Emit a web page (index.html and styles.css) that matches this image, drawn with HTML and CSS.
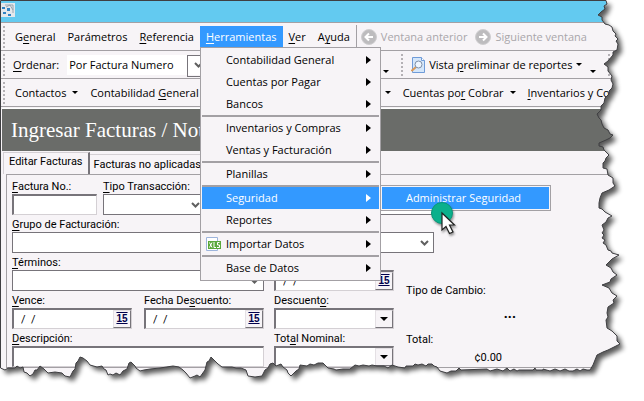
FILE: index.html
```
<!DOCTYPE html>
<html lang="es">
<head>
  <meta charset="UTF-8">
  <meta name="viewport" content="width=device-width, initial-scale=1.0">
  <title>Ingresar Facturas</title>
  <link rel="stylesheet" href="styles.css">
</head>
<body>
<div class="window">
  <header class="titlebar">
    <svg class="app-icon" viewBox="0 0 14 14">
      <rect width="14" height="14" fill="#e4e8ec"/>
      <path d="M4 2h8v8M5 4l4-2 3 5" fill="none" stroke="#9aa6b0"/>
      <path d="M1 4h3v2H1zM6 5h3v3H6zM2 9h3v2H2zM7 11h3v2H7z" fill="#2f83c4"/>
    </svg>
  </header>

  <nav class="bar">
    <span class="grip"></span>
    <button class="item"><span>G<u>e</u>neral</span></button>
    <button class="item">Parámetros</button>
    <button class="item"><span><u>R</u>eferencia</span></button>
    <div class="dropdown">
      <button class="item active"><span><u>H</u>erramientas</span></button>
      <ul class="menu">
        <li><button class="entry">Contabilidad General</button></li>
        <li><button class="entry">Cuentas por Pagar</button></li>
        <li><button class="entry">Bancos</button></li>
        <li class="line"><button class="entry">Inventarios y Compras</button></li>
        <li><button class="entry">Ventas y Facturación</button></li>
        <li class="line"><button class="entry">Planillas</button></li>
        <li class="line dropdown">
          <button class="entry active">Seguridad</button>
          <ul class="menu submenu">
            <li><button class="entry active">Administrar Seguridad</button></li>
          </ul>
        </li>
        <li><button class="entry">Reportes</button></li>
        <li class="line">
          <button class="entry">
            <svg class="xls-icon" viewBox="0 0 16 14">
              <path d="M1.500 .5h11v13h-11z" fill="#fff" stroke="#9db4dc"/>
              <path d="M3 4h13v8H3z" fill="#5aa83c"/>
              <path d="M4.500 5.500l2.500 5M7 5.500l-2.500 5M9 5v5.500H11M14.500 5.500h-2V8H14.500v2.500H12" fill="none" stroke="#fff"/>
            </svg>
            Importar Datos
          </button>
        </li>
        <li class="line"><button class="entry">Base de Datos</button></li>
      </ul>
    </div>
    <button class="item"><span><u>V</u>er</span></button>
    <button class="item"><span>A<u>y</u>uda</span></button>
    <span class="divider"></span>
    <button class="item nav" disabled>
      <svg class="nav-icon" viewBox="0 0 16 16">
        <circle cx="8" cy="8" r="7.500" fill="#bdbcbe" stroke="#cfced0"/>
        <path d="M12 8H5M8 4.500L4.500 8 8 11.500" fill="none" stroke="#fff" stroke-width="2"/>
      </svg>
      Ventana anterior
    </button>
    <button class="item nav" disabled>
      <svg class="nav-icon" viewBox="0 0 16 16">
        <circle cx="8" cy="8" r="7.500" fill="#bdbcbe" stroke="#cfced0"/>
        <path d="M4 8h7M8 4.500L11.500 8 8 11.500" fill="none" stroke="#fff" stroke-width="2"/>
      </svg>
      Siguiente ventana
    </button>
  </nav>

  <div class="bar">
    <span class="grip"></span>
    <label class="order-label" for="orden"><u>O</u>rdenar:</label>
    <span class="combo order">
      <select id="orden"><option>Por Factura Numero</option></select>
      <svg class="chevron" viewBox="0 0 9 6"><path d="M1 1l3.500 3.500L8 1" fill="none" stroke="#606060" stroke-width="2"/></svg>
    </span>
    <input class="search" type="text" aria-label="Buscar">
    <span class="caret low"></span>
    <span class="grip"></span>
    <button class="item report">
      <svg class="report-icon" viewBox="0 0 14 16">
        <path d="M1.500 .5h9l3 3v12h-12z" fill="#d4e6fa" stroke="#6f9bd8"/>
        <path d="M10.500 .5v3h3" fill="#fff" stroke="#6f9bd8"/>
        <path d="M5 10l-4.500 4" stroke="#d99a5b" stroke-width="2"/>
        <circle cx="7.500" cy="7.500" r="3.500" fill="#eef6ff" stroke="#7d8ea6"/>
      </svg>
      <span>Vista <u>p</u>reliminar de reportes</span>
      <span class="caret"></span>
    </button>
    <span class="caret low"></span>
    <span class="grip"></span>
  </div>

  <div class="bar modules">
    <span class="grip"></span>
    <button class="item module">Contactos <span class="caret"></span></button>
    <button class="item module"><span>Contabilidad <u>G</u>eneral</span> <span class="caret"></span></button>
    <button class="item module hidden-part" aria-label="Cuentas por Pagar"><span class="caret"></span></button>
    <button class="item module"><span>Cuentas po<u>r</u> Cobrar</span> <span class="caret"></span></button>
    <button class="item module"><span><u>I</u>nventarios y Compras</span></button>
  </div>

  <h1 class="heading">Ingresar Facturas / Notas</h1>

  <div class="tabs">
    <button class="tab selected">Editar Facturas</button>
    <button class="tab">Facturas no aplicadas</button>
  </div>

  <form class="form">
    <div class="pair">
      <div class="field number">
        <label for="factura"><u>F</u>actura No.:</label>
        <input class="sunken" id="factura" type="text">
      </div>
      <div class="field">
        <label for="tipo"><u>T</u>ipo Transacción:</label>
        <span class="combo type">
          <select id="tipo"><option></option></select>
          <svg class="chevron" viewBox="0 0 9 6"><path d="M1 1l3.500 3.500L8 1" fill="none" stroke="#606060" stroke-width="2"/></svg>
        </span>
      </div>
    </div>
    <div class="field client">
      <input class="flat" type="text" aria-label="Cliente">
    </div>
    <div class="field group">
      <label for="grupo"><u>G</u>rupo de Facturación:</label>
      <span class="combo">
        <select id="grupo"><option></option></select>
        <svg class="chevron" viewBox="0 0 9 6"><path d="M1 1l3.500 3.500L8 1" fill="none" stroke="#606060" stroke-width="2"/></svg>
      </span>
    </div>
    <div class="field">
      <label for="terminos"><u>T</u>érminos:</label>
      <span class="combo">
        <select id="terminos"><option></option></select>
        <svg class="chevron" viewBox="0 0 9 6"><path d="M1 1l3.500 3.500L8 1" fill="none" stroke="#606060" stroke-width="2"/></svg>
      </span>
    </div>
    <div class="field unlabeled">
      <span class="date"><input type="text" value="/  /" aria-label="Fecha"><button type="button">15</button></span>
    </div>
    <div class="pair dates">
      <div class="field">
        <label for="vence"><u>V</u>ence:</label>
        <span class="date"><input id="vence" type="text" value="/  /"><button type="button">15</button></span>
      </div>
      <div class="field">
        <label for="fdesc">Fecha De<u>s</u>cuento:</label>
        <span class="date"><input id="fdesc" type="text" value="/  /"><button type="button">15</button></span>
      </div>
    </div>
    <div class="field">
      <label for="descuento">Descuent<u>o</u>:</label>
      <span class="date"><input id="descuento" type="text"><button type="button" aria-label="Abrir"><span class="caret big"></span></button></span>
    </div>
    <div class="field">
      <label for="descripcion"><u>D</u>escripción:</label>
      <input class="sunken" id="descripcion" type="text">
    </div>
    <div class="field">
      <label for="total">Tot<u>a</u>l Nominal:</label>
      <span class="date"><input id="total" type="text"><button type="button" aria-label="Abrir"><span class="caret big"></span></button></span>
    </div>
    <div class="totals">
      <p>Tipo de Cambio:</p>
      <p class="value dots">...</p>
      <p>Total:</p>
      <p class="value">¢0.00</p>
    </div>
  </form>
</div>

<!-- torn paper edge -->
<svg class="torn" viewBox="0 0 644 401" preserveAspectRatio="none">
  <defs>
    <path id="sheet" d="M.5 .5H606L607 4 604 6 605 9 601 12 598 15 602 17 602 20 605 24 609 25 612 27 613 31 616 34 615 36 618 39 616 41 618 44 617 50 613 52 613 55 608 61 604 64 608 67 608 71 612 76 611 80 613 84 612 88 609 91 609 94 605 98 604 103 601 106 601 110 597 114 599 118 601 120 602 124 604 128 608 130 610 134 613 135 610 138 606 140 599 143 599 146 603 147 604 150 606 152 609 155 606 158 605 161 603 163 603 168 607 169 608 175 613 178 613 183 615 186 609 190 602 193 600 198 599 203 599 208 602 209 605 212 612 216 608 218 606 222 602 225 604 230 602 233 604 235 602 238 605 240 603 243 606 245 608 250 611 251 612 253 619 255 612 259 606 265 611 268 613 272 617 275 611 279 610 282 602 285 609 288 612 293 617 296 613 300 614 303 608 307 607 313 608 317 606 320 607 328 612 331 617 336 617 341 620 344 614 347 608 350 603 352 597 355 595 360 593 365 590 370 587 370 583 369 580 371 577 369 573 371 569 371 565 369 560 371 555 369 550 371 543 369 543 370 536 370 535 368 533 370 519 370 517 371 514 369 510 371 507 368 503 371 497 369 490 371 487 369 461 370 459 368 456 371 451 371 447 373 440 371 437 367 434 366 432 364 428 364 426 366 422 364 418 365 415 364 413 366 406 366 405 368 398 367 392 365 388 368 384 366 377 366 372 365 369 366 363 365 359 366 355 365 350 369 343 369 336 370 334 369 328 368 323 363 318 363 314 365 310 364 307 366 300 365 299 369 296 371 291 376 288 373 287 370 283 367 281 364 276 366 273 363 270 364 268 368 265 370 262 376 255 377 248 376 246 370 241 368 236 368 232 367 222 367 218 364 215 361 211 357 209 361 207 362 205 370 200 377 197 375 195 376 190 378 186 373 183 370 179 367 173 366 160 368 150 369 144 370 140 371 136 368 135 366 131 362 129 363 127 369 123 371 120 375 116 373 113 375 110 374 108 375 106 370 104 369 102 366 97 367 90 365 87 361 83 358 80 357 78 361 76 363 75 369 73 371 70 377 65 376 62 373 55 372 48 373 44 369 40 366 37 370 35 370 33 374 30 376 27 373 24 372 23 367 20 368 17 366 15 368 8 368 5 370 .5 368Z"/>
    <mask id="outside">
      <rect width="644" height="401" fill="#fff"/>
      <use href="#sheet" fill="#000"/>
    </mask>
    <filter id="soft" x="-5%" y="-5%" width="110%" height="110%">
      <feGaussianBlur stdDeviation="2.500"/>
    </filter>
  </defs>
  <g mask="url(#outside)">
    <rect width="644" height="401" fill="#fff"/>
    <use class="torn-shadow" href="#sheet" filter="url(#soft)" transform="translate(4 4)"/>
  </g>
  <use class="torn-line" href="#sheet"/>
</svg>

<svg class="pointer" viewBox="0 0 30 38">
  <circle cx="12" cy="12" r="10.500" fill="#0bb08c" stroke="#0a9678"/>
  <path d="M12 12v17l4-3.500 3.500 7 3.500-1.500-3.500-7h5z" fill="#fff" stroke="#222" stroke-width="1.200"/>
</svg>
</body>
</html>
```
FILE: styles.css
```
* {
  box-sizing: border-box;
}
body {
  margin: 0;
  background-color: #fff;
  overflow: hidden;
  position: relative;
}
button,
input,
select {
  font: inherit;
  color: inherit;
  margin: 0;
  padding: 0;
  border: none;
  background: none;
  border-radius: 0;
  appearance: none;
  outline: none;
}
u {
  text-underline-offset: 2px;
}
.window {
  min-height: 100vh;
  padding-left: 1px;
  background-color: #f7f4f7;
  color: #000;
  font-family: "Open Sans", sans-serif;
  font-size: 11px;
  white-space: nowrap;
  overflow: hidden;
}
.titlebar {
  height: 23px;
  padding-top: 3px;
  background-color: #63caf0;
  border-bottom: 1px solid #a3a0a4;
}
.app-icon {
  display: block;
  width: 14px;
  height: 14px;
}

/* menu and tool bars */
.bar {
  display: flex;
  align-items: center;
  height: 28px;
  padding-left: 2px;
  border-bottom: 1px solid #a3a0a4;
}
.grip {
  flex: none;
  width: 2px;
  height: 22px;
  margin-right: 4px;
  background: repeating-linear-gradient(#b4b1b5 0 2px, transparent 2px 4px);
}
.item {
  flex: none;
  display: flex;
  align-items: center;
  height: 22px;
  padding: 0 6px;
}
.active {
  background-color: #3399ff;
  color: #fff;
}
.divider {
  flex: none;
  width: 1px;
  height: 24px;
  background-color: #a3a0a4;
}
.nav {
  padding: 0 4px;
  gap: 4px;
  color: #a9a6aa;
}
.nav-icon {
  width: 16px;
  height: 16px;
}
.caret {
  flex: none;
  width: 0;
  border: 3px solid transparent;
  border-top-color: #000;
  border-bottom: none;
}
.low {
  margin: 14px 12px 0 4px;
}
.order-label {
  flex: none;
  padding: 0 8px 0 4px;
}
.combo {
  position: relative;
  display: block;
  background-color: #fff;
}
.combo select {
  display: block;
  width: 100%;
  height: 20px;
}
.chevron {
  position: absolute;
  right: 4px;
  top: 7px;
  width: 9px;
  height: 6px;
  pointer-events: none;
}
.order {
  flex: none;
  width: 140px;
}
.order select {
  padding-left: 2px;
}
.order::after {
  content: "";
  position: absolute;
  top: 0;
  right: 0;
  width: 18px;
  height: 20px;
  border: 1px solid #77747a;
  pointer-events: none;
}
.search {
  flex: none;
  width: 164px;
  height: 20px;
  margin-left: 8px;
  background-color: #fff;
}
.report {
  gap: 4px;
  padding: 0 4px;
}
.report-icon {
  width: 14px;
  height: 16px;
}
.module {
  gap: 6px;
}
.hidden-part {
  width: 180px;
  justify-content: flex-end;
}

/* drop-down menu */
.dropdown {
  position: relative;
}
.menu {
  position: absolute;
  z-index: 2;
  top: 21px;
  left: 0;
  width: 181px;
  margin: 0;
  padding: 1px;
  list-style: none;
  background-color: #f7f4f7;
  border: 1px solid #a3a0a4;
}
.line {
  border-top: 2px solid #a3a0a4;
}
.entry {
  position: relative;
  display: block;
  width: 100%;
  height: 22px;
  padding-left: 24px;
  text-align: left;
}
.entry::after {
  content: "";
  position: absolute;
  right: 8px;
  top: 7px;
  border: 4px solid transparent;
  border-left: 5px solid currentColor;
  border-right: none;
}
.xls-icon {
  position: absolute;
  left: 3px;
  top: 4px;
  width: 16px;
  height: 14px;
}
.submenu {
  top: -2px;
  left: 178px;
  width: 171px;
}
.submenu .entry::after {
  display: none;
}

/* invoice form */
.heading {
  margin: 1px 0 0 1px;
  padding-left: 9px;
  background-color: #6a6c69;
  border-top: 1px solid #fff;
  color: #fff;
  font: 21px/42px "Liberation Serif", serif;
}
.tabs {
  display: flex;
  align-items: flex-end;
  height: 23px;
  padding-left: 2px;
  font-family: Roboto, sans-serif;
}
.tab {
  height: 20px;
  padding: 0 4px;
  border-top: 1px solid #d4d0d4;
  border-right: 1px solid #a3a0a4;
}
.selected {
  height: 22px;
  padding: 0 5px 4px;
  border-left: 1px solid #d4d0d4;
  border-right: 2px solid #77747a;
}
.form {
  display: grid;
  grid-template-columns: 252px 120px 1fr;
  grid-auto-rows: 38px;
  column-gap: 10px;
  margin-left: 5px;
  padding: 2px 0 0 5px;
  border: 1px solid #a3a0a4;
  border-right: none;
  font-family: Roboto, sans-serif;
}
.field {
  flex: 1;
  min-width: 0;
}
.field label {
  display: block;
  height: 17px;
  line-height: 20px;
}
.pair {
  display: flex;
  gap: 6px;
}
.dates {
  gap: 12px;
}
.number {
  flex: none;
  width: 85px;
}
.type {
  width: 102px;
}
.unlabeled {
  padding-top: 17px;
}
.client {
  grid-column: 2 / 4;
  width: 160px;
  padding-top: 17px;
}
.group {
  grid-column: 1 / 4;
  width: 422px;
}
.sunken,
.flat,
.date {
  display: flex;
  width: 100%;
  height: 21px;
  background-color: #fff;
  border: 1px solid #77747a;
}
.sunken,
.date {
  border-width: 2px 1px 1px 2px;
  border-color: #77747a #d4d0d4 #d4d0d4 #77747a;
}
.form .combo {
  border: 1px solid #77747a;
}
.form .combo select {
  height: 19px;
}
.date input {
  flex: 1;
  min-width: 0;
  padding-left: 7px;
  white-space: pre;
}
.date button {
  display: flex;
  align-items: center;
  justify-content: center;
  width: 18px;
  background-color: #f7f4f7;
  border: 1px solid #e4e0e4;
  border-right-color: #77747a;
  border-bottom-color: #77747a;
  color: #00004c;
  font: bold 10px/10px "Liberation Sans", sans-serif;
  text-decoration: underline overline;
}
.big {
  border-width: 4px 4px 0;
}
.totals {
  grid-area: 3 / 3 / 6 / 4;
  width: 132px;
  padding: 30px 0 0 2px;
}
.totals p {
  margin: 0;
  line-height: 16px;
}
.totals .value {
  padding: 2px 34px 0 0;
  text-align: right;
}
.totals .dots {
  padding: 6px 20px 11px 0;
  font-size: 14px;
  font-weight: bold;
}

/* artwork over the window */
.torn {
  position: absolute;
  top: 0;
  left: 0;
  width: 100%;
  height: 100%;
  pointer-events: none;
}
.torn-shadow {
  fill: #000;
  opacity: 0.65;
}
.torn-line {
  fill: none;
  stroke: #3f3f42;
  stroke-width: 1;
}
.pointer {
  position: absolute;
  z-index: 3;
  top: 201px;
  left: 430px;
  width: 30px;
  height: 38px;
  filter: drop-shadow(1px 2px 1px rgba(0, 0, 0, 0.4));
  pointer-events: none;
}
```
